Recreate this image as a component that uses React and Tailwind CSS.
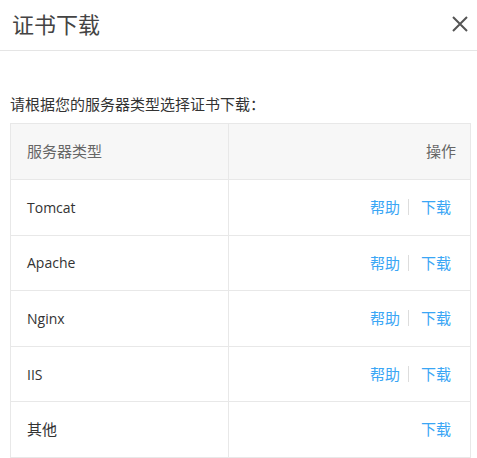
import React from 'react';

const rows = [
  { name: 'Tomcat', help: true },
  { name: 'Apache', help: true },
  { name: 'Nginx', help: true },
  { name: 'IIS', help: true },
  { name: '其他', help: false, cjk: true },
];

export default function App() {
  return (
    <div className="w-[477px] h-[458px] bg-white overflow-hidden text-[#333]" style={{ fontFamily: '"Open Sans", "Noto Sans CJK SC", sans-serif' }}>
      {/* Header */}
      <div className="h-[51px] border-b border-[#e5e5e5] flex items-center justify-between pl-[12px] pr-[9px]">
        <span className="text-[22px] text-[#444] leading-none -mt-[2px]">证书下载</span>
        <svg width="16" height="16" viewBox="0 0 16 16" className="-mt-[2px]">
          <path d="M1 1 L15 15 M15 1 L1 15" stroke="#555" strokeWidth="2" />
        </svg>
      </div>

      {/* Body */}
      <div className="px-[10px]">
        <p className="mt-[43px] text-[15px] leading-[20px] text-[#333]">请根据您的服务器类型选择证书下载：</p>
        <table className="mt-[9px] w-[461px] border-collapse text-[14px]">
          <thead>
            <tr className="bg-[#f7f7f7] h-[56px]">
              <th className="w-[218px] border border-[#e8e8e8] text-left font-normal pl-[16px] text-[15px] text-[#666]">服务器类型</th>
              <th className="border border-[#e8e8e8] text-right font-normal pr-[14px] text-[15px] text-[#666]">操作</th>
            </tr>
          </thead>
          <tbody>
            {rows.map((r) => (
              <tr key={r.name} className="h-[55.6px]">
                <td className={`border border-[#e8e8e8] pl-[16px] text-[#333] ${r.cjk ? 'text-[15px]' : ''}`}>{r.name}</td>
                <td className="border border-[#e8e8e8] pr-[19px] text-right text-[15px]">
                  <span className="inline-flex items-center text-[#3aa6f5]">
                    {r.help && (
                      <>
                        <span>帮助</span>
                        <span className="ml-[8px] mr-[12px] w-px h-[16px] bg-[#ddd]" />
                      </>
                    )}
                    <span>下载</span>
                  </span>
                </td>
              </tr>
            ))}
          </tbody>
        </table>
      </div>
    </div>
  );
}
